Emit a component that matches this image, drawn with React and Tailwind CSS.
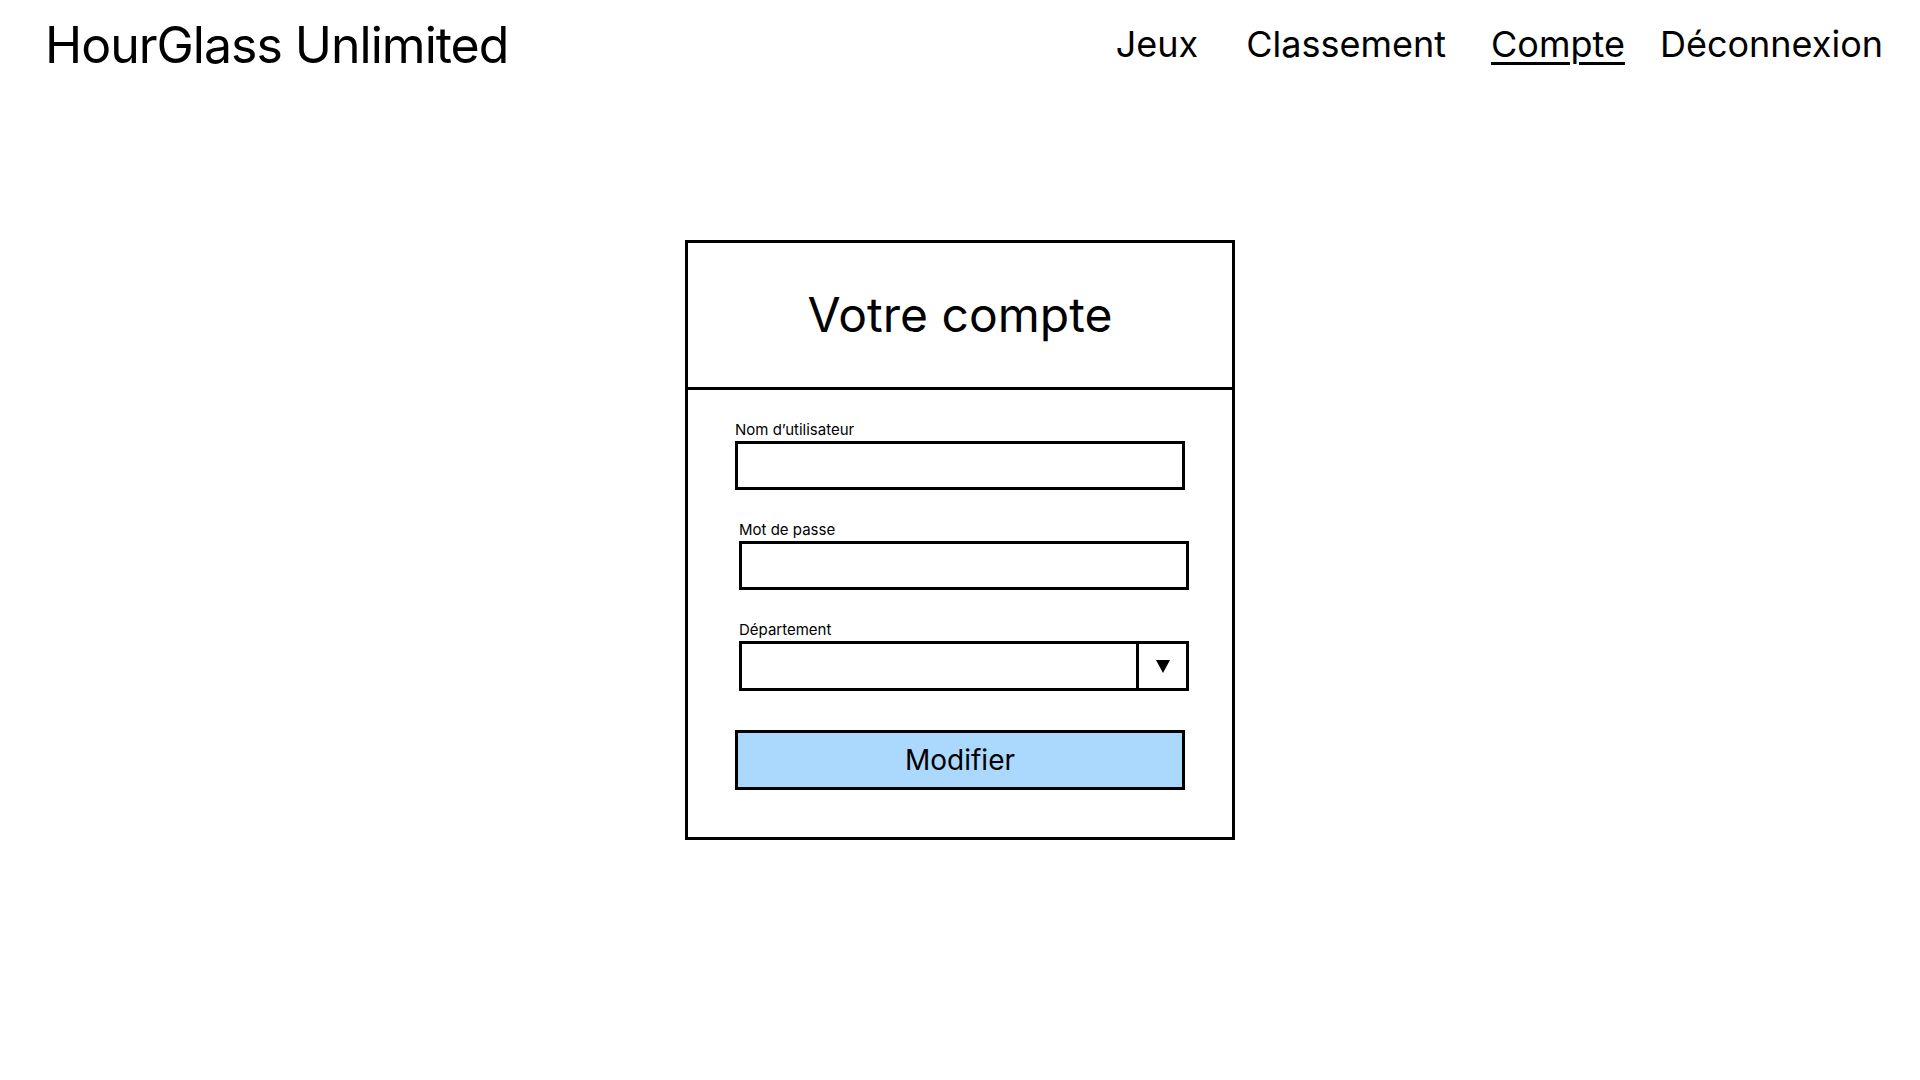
import { useState } from "react";

const navItems = [
  { label: "Jeux", spacing: "" },
  { label: "Classement", spacing: "ml-[48px]" },
  { label: "Compte", spacing: "ml-[45px]", active: true },
  { label: "Déconnexion", spacing: "ml-[35px]" },
];

const Field = ({ label, className = "", children }) => (
  <div className={`flex flex-col ${className}`}>
    <label className="text-[15px] leading-none text-black">{label}</label>
    <div className="mt-1">{children}</div>
  </div>
);

const App = () => {
  const [username, setUsername] = useState("");
  const [password, setPassword] = useState("");

  return (
    <div className="min-h-screen w-full bg-white font-['Inter',sans-serif] text-black">
      <header className="flex h-20 items-start justify-between pl-[45px] pr-[37px] pt-5">
        <div className="text-[50px] leading-none tracking-[-0.02em]">HourGlass Unlimited</div>
        <nav className="mt-[6px] flex items-start text-[36px] leading-none">
          {navItems.map((item) => (
            <a
              key={item.label}
              href="#"
              className={`${item.spacing} ${
                item.active ? "underline decoration-[3px] underline-offset-[5px]" : ""
              }`}
            >
              {item.label}
            </a>
          ))}
        </nav>
      </header>

      <main className="flex justify-center pt-[160px]">
        <div className="flex h-[600px] w-[550px] flex-col border-[3px] border-black">
          <div className="flex h-[147px] justify-center border-b-[3px] border-black pt-[48px]">
            <h1 className="text-[48px] leading-none">Votre compte</h1>
          </div>

          <form className="flex flex-col pl-[47px] pt-[32px]" onSubmit={(e) => e.preventDefault()}>
            <Field label="Nom d’utilisateur">
              <input
                value={username}
                onChange={(e) => setUsername(e.target.value)}
                className="h-[49px] w-[450px] border-[3px] border-black bg-white px-2 outline-none"
              />
            </Field>

            <Field label="Mot de passe" className="ml-1 mt-8">
              <input
                type="password"
                value={password}
                onChange={(e) => setPassword(e.target.value)}
                className="h-[49px] w-[450px] border-[3px] border-black bg-white px-2 outline-none"
              />
            </Field>

            <Field label="Département" className="ml-1 mt-8">
              <div className="flex h-[50px] w-[450px] border-[3px] border-black bg-white">
                <div className="flex-1" />
                <div className="flex w-[50px] items-center justify-center border-l-[3px] border-black">
                  <svg width="14" height="13" viewBox="0 0 14 13">
                    <polygon points="0,0 14,0 7,13" fill="black" />
                  </svg>
                </div>
              </div>
            </Field>

            <button
              type="submit"
              className="mt-[39px] h-[60px] w-[450px] border-[3px] border-black bg-[#aad9fd] text-[28px] leading-none"
            >
              Modifier
            </button>
          </form>
        </div>
      </main>
    </div>
  );
};

export default App;
